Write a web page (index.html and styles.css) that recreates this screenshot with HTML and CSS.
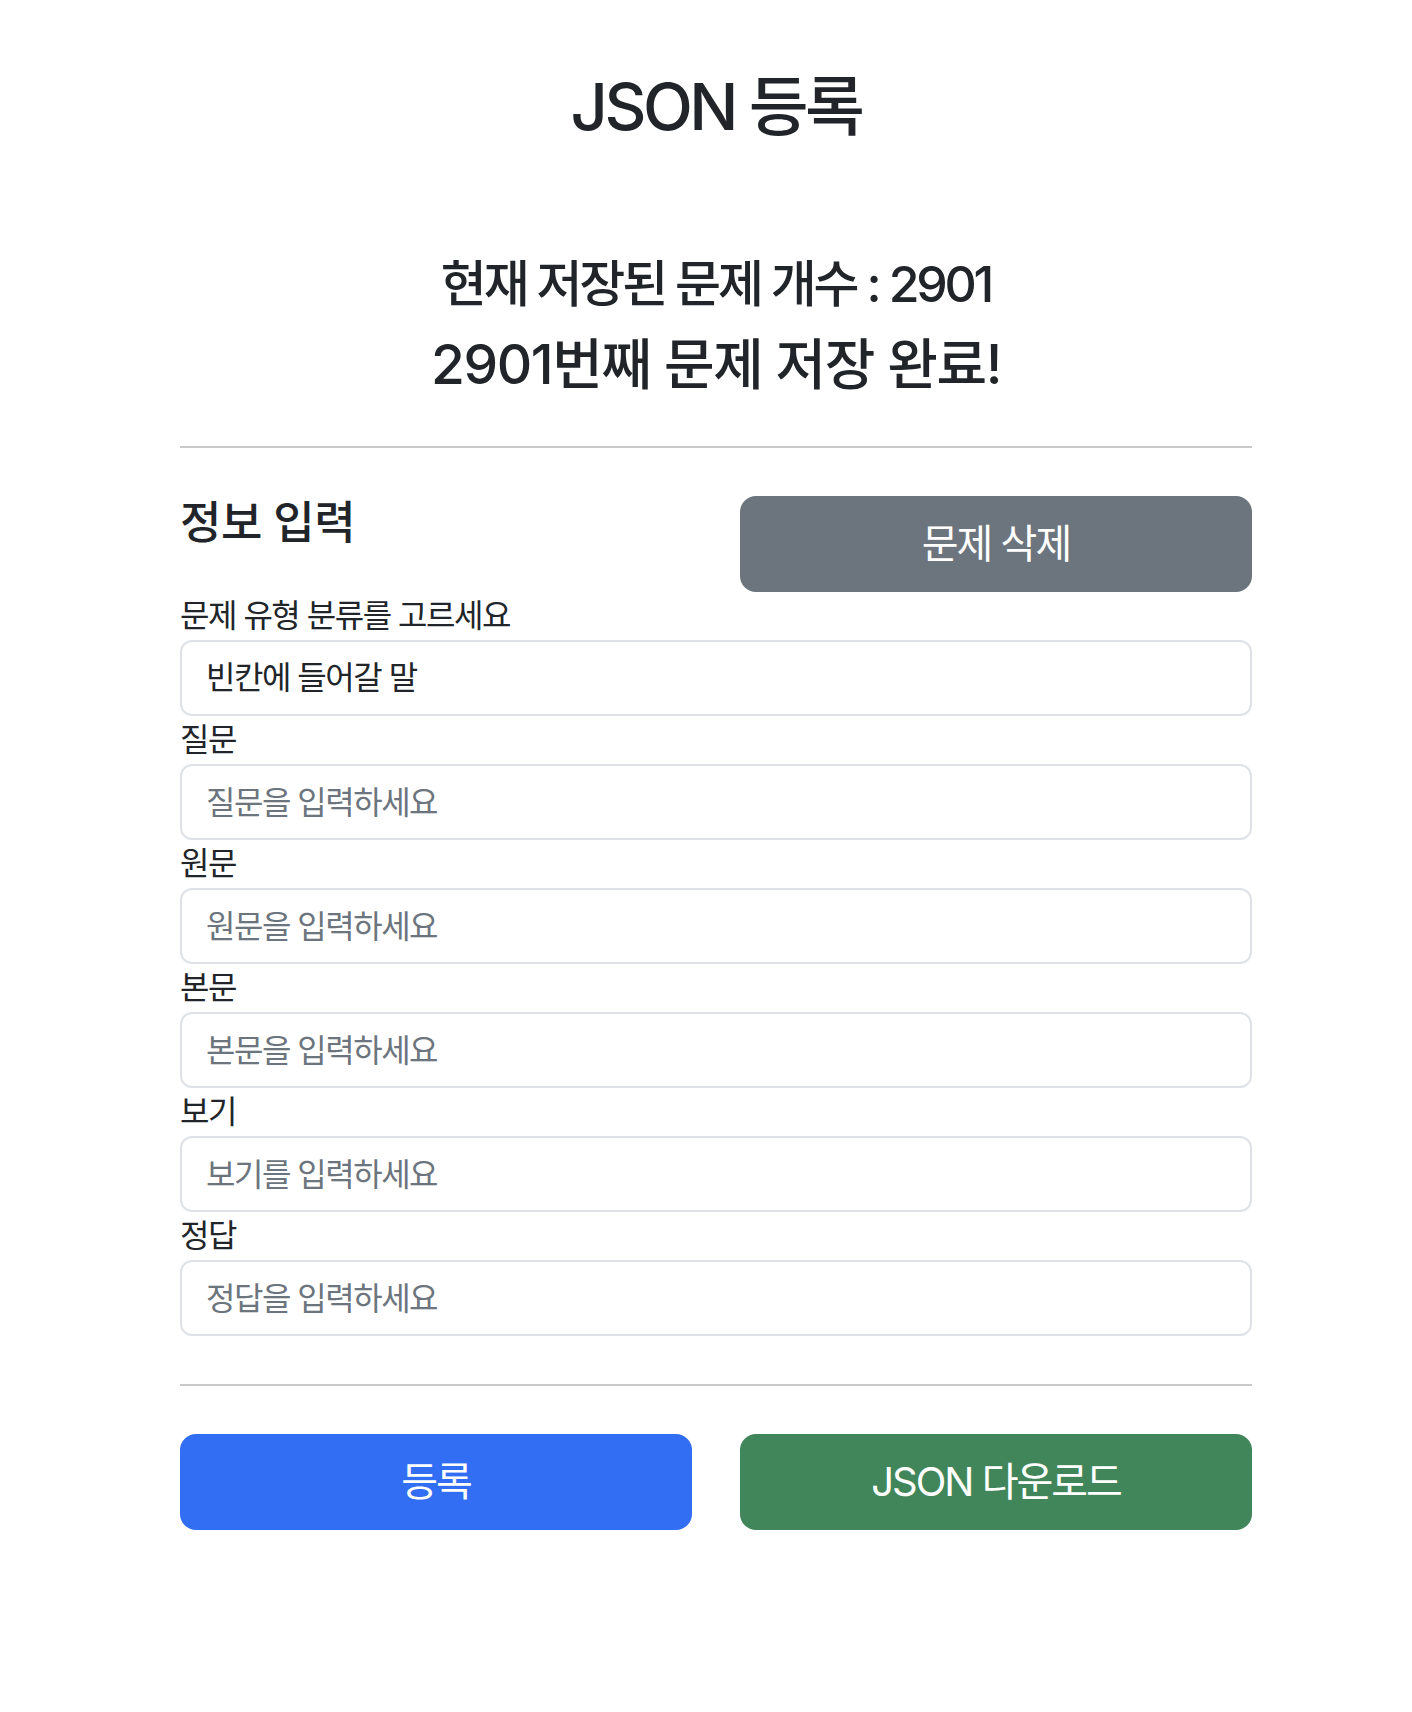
FILE: index.html
```html
<!DOCTYPE html>
<html lang="ko">
<head>
<meta charset="utf-8">
<title>JSON 등록</title>
<link rel="stylesheet" href="styles.css">
</head>
<body>
<div class="page">
  <h1 class="title">JSON 등록</h1>
  <div class="status">
    <h3 class="count">현재 저장된 문제 개수 : 2901</h3>
    <h2 class="saved">2901번째 문제 저장 완료!</h2>
  </div>
  <hr class="divider top-divider">
  <div class="head-row">
    <h4 class="section-title">정보 입력</h4>
    <button class="btn btn-gray" type="button">문제 삭제</button>
  </div>
  <form class="fields">
    <label class="field-label">문제 유형 분류를 고르세요</label>
    <div class="field-input value">빈칸에 들어갈 말</div>
    <label class="field-label">질문</label>
    <input class="field-input" placeholder="질문을 입력하세요">
    <label class="field-label">원문</label>
    <input class="field-input" placeholder="원문을 입력하세요">
    <label class="field-label">본문</label>
    <input class="field-input" placeholder="본문을 입력하세요">
    <label class="field-label">보기</label>
    <input class="field-input" placeholder="보기를 입력하세요">
    <label class="field-label">정답</label>
    <input class="field-input" placeholder="정답을 입력하세요">
  </form>
  <hr class="divider bottom-divider">
  <div class="action-row">
    <button class="btn btn-blue" type="button">등록</button>
    <button class="btn btn-green" type="button">JSON 다운로드</button>
  </div>
</div>
</body>
</html>
```
FILE: styles.css
```css
* { box-sizing: border-box; }
html, body { margin: 0; padding: 0; background: #fff; }
body {
  font-family: "Inter", "Noto Sans CJK KR", sans-serif;
  color: #212529;
  padding-left: 20px;
}
.page {
  width: 1072px;
  margin: 0 auto;
  padding-top: 68px;
  padding-bottom: 120px;
}
.title {
  margin: 0;
  font-size: 65px;
  line-height: 78px;
  font-weight: 500;
  text-align: center;
  letter-spacing: -3.5px;
}
.status { margin-top: 108px; text-align: center; }
.count {
  margin: 0 0 17px;
  font-size: 50px;
  line-height: 60px;
  font-weight: 500;
  letter-spacing: -3.2px;
}
.saved {
  margin: 0;
  font-size: 55px;
  line-height: 66px;
  font-weight: 500;
  letter-spacing: -1.4px;
}
.divider {
  border: 0;
  height: 2px;
  background: #c8c9ca;
  margin: 0;
}
.top-divider { margin-top: 49px; margin-bottom: 48px; }
.bottom-divider { margin-top: 48px; margin-bottom: 48px; }
.head-row {
  display: grid;
  grid-template-columns: 1fr 1fr;
  column-gap: 48px;
  align-items: start;
}
.section-title {
  margin: 0;
  font-size: 45px;
  line-height: 54px;
  font-weight: 500;
  letter-spacing: -0.5px;
}
.btn {
  height: 96px;
  border: 0;
  border-radius: 16px;
  color: #fff;
  font-family: inherit;
  font-size: 40px;
  line-height: 60px;
  letter-spacing: -2px;
  padding: 0 32px;
  width: 100%;
}
.btn-gray { background: #6c757d; }
.btn-blue { background: #326ef3; }
.btn-green { background: #41865a; }
.fields { display: flex; flex-direction: column; }
.field-label {
  display: block;
  font-size: 32px;
  line-height: 48px;
  letter-spacing: -1.5px;
}
.field-input {
  display: block;
  width: 100%;
  height: 76px;
  border: 2px solid #dee2e6;
  border-radius: 12px;
  padding: 0 24px;
  font-family: inherit;
  font-size: 32px;
  line-height: 72px;
  color: #212529;
  letter-spacing: -1.5px;
  background: #fff;
}
.field-input::placeholder { color: #6c757d; opacity: 1; }
.action-row {
  display: grid;
  grid-template-columns: 1fr 1fr;
  column-gap: 48px;
}
```
